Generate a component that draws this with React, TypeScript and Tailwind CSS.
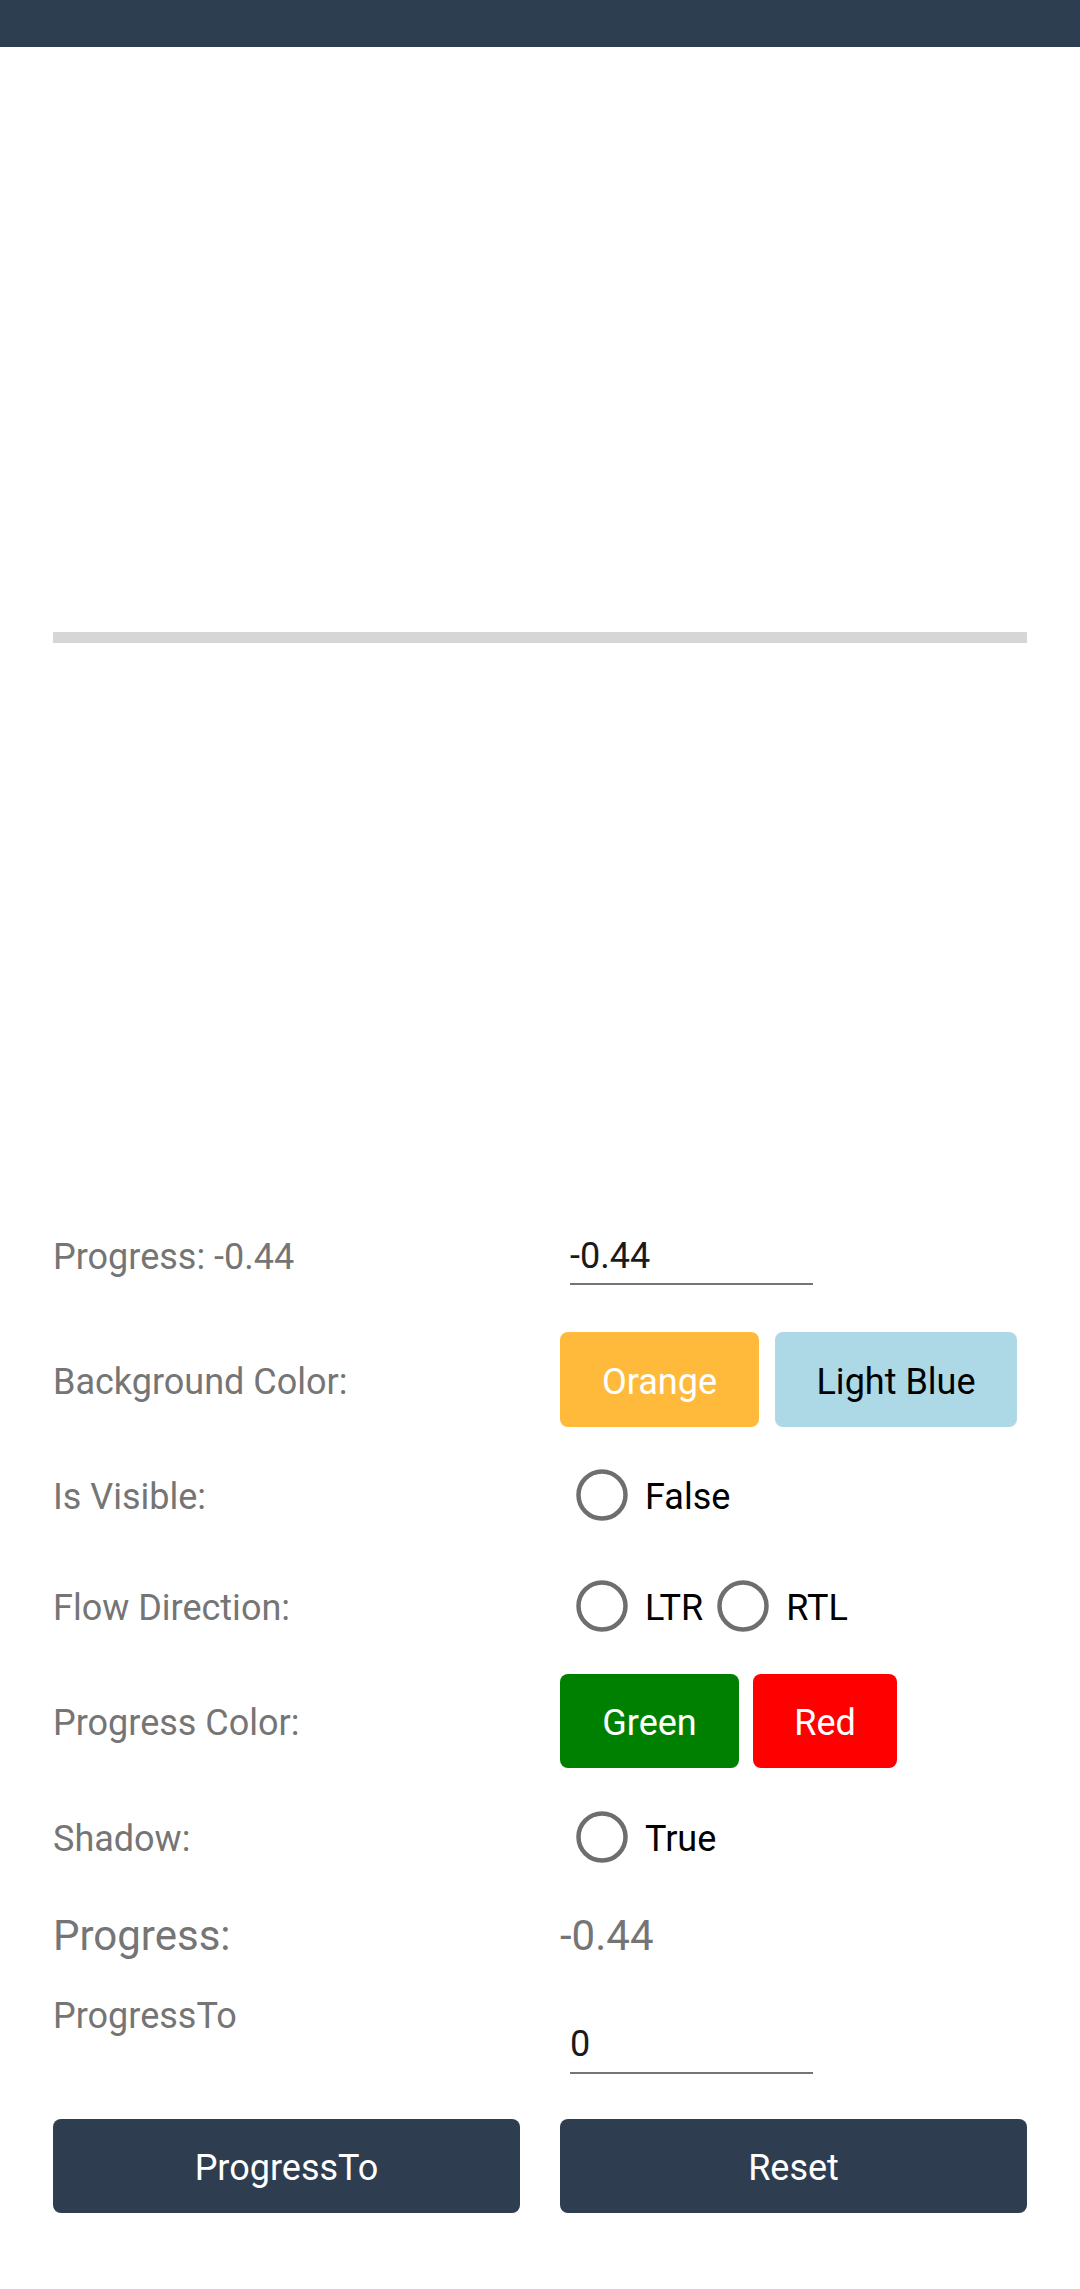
import { useState } from "react";

const Radio = ({ label }: { label: string }) => (
  <div className="flex items-center gap-[17px]">
    <svg width="52" height="52" viewBox="0 0 52 52" className="shrink-0">
      <circle cx="26" cy="26" r="23.5" fill="none" stroke="#6e6e6e" strokeWidth="4.5" />
    </svg>
    <span className="pt-[4px] text-[36px] leading-none text-black">{label}</span>
  </div>
);

const Label = ({ children }: { children: React.ReactNode }) => (
  <span className="pt-[4px] text-[36px] leading-[44px] text-[#757575]">{children}</span>
);

export default function App() {
  const [progress, setProgress] = useState("-0.44");
  const [target, setTarget] = useState("0");

  return (
    <div className="w-[1080px] min-h-[2289px] bg-white font-['Roboto',sans-serif]">
      {/* Toolbar */}
      <div className="h-[47px] bg-[#2c3e50]" />

      {/* Progress bar area */}
      <div className="h-[1181px] flex items-center px-[53px]">
        <div className="w-full h-[11px] bg-[#d6d6d6]" />
      </div>

      <div className="px-[53px]">
        {/* Progress input */}
        <div className="grid grid-cols-2 gap-x-[40px] h-[70px] items-center -mt-[8px]">
          <Label>Progress: {progress}</Label>
          <div className="ml-[10px] w-[243px] h-[60px] pt-[4px] border-b-2 border-[#757575] flex items-center">
            <input
              value={progress}
              onChange={(e) => setProgress(e.target.value)}
              className="w-full bg-transparent outline-none text-[36px] leading-none text-[#1a1a1a]"
            />
          </div>
        </div>

        {/* Background color */}
        <div className="grid grid-cols-2 gap-x-[40px] h-[95px] items-center mt-[42px]">
          <Label>Background Color:</Label>
          <div className="flex gap-[16px] h-full">
            <button className="w-[199px] h-full pt-[4px] rounded-[8px] bg-[#ffba3c] text-white text-[36px]">Orange</button>
            <button className="w-[242px] h-full pt-[4px] rounded-[8px] bg-[#add8e6] text-black text-[36px]">Light Blue</button>
          </div>
        </div>

        {/* Is visible */}
        <div className="grid grid-cols-2 gap-x-[40px] h-[60px] items-center mt-[38px]">
          <Label>Is Visible:</Label>
          <div className="flex pl-[16px]">
            <Radio label="False" />
          </div>
        </div>

        {/* Flow direction */}
        <div className="grid grid-cols-2 gap-x-[40px] h-[60px] items-center mt-[51px]">
          <Label>Flow Direction:</Label>
          <div className="flex pl-[16px] gap-[14px]">
            <Radio label="LTR" />
            <Radio label="RTL" />
          </div>
        </div>

        {/* Progress color */}
        <div className="grid grid-cols-2 gap-x-[40px] h-[94px] items-center mt-[38px]">
          <Label>Progress Color:</Label>
          <div className="flex gap-[14px] h-full">
            <button className="w-[179px] h-full pt-[4px] rounded-[8px] bg-[#008000] text-white text-[36px]">Green</button>
            <button className="w-[144px] h-full pt-[4px] rounded-[8px] bg-[#ff0000] text-white text-[36px]">Red</button>
          </div>
        </div>

        {/* Shadow */}
        <div className="grid grid-cols-2 gap-x-[40px] h-[60px] items-center mt-[39px]">
          <Label>Shadow:</Label>
          <div className="flex pl-[16px]">
            <Radio label="True" />
          </div>
        </div>

        {/* Progress value */}
        <div className="grid grid-cols-2 gap-x-[40px] h-[60px] items-center mt-[39px]">
          <span className="text-[42px] leading-none text-[#757575]">Progress:</span>
          <span className="text-[42px] leading-none text-[#757575]">{progress}</span>
        </div>

        {/* ProgressTo input */}
        <div className="grid grid-cols-2 gap-x-[40px] items-start mt-[28px]">
          <span className="text-[36px] leading-[44px] text-[#757575]">ProgressTo</span>
          <div className="ml-[10px] mt-[18px] w-[243px] h-[62px] pt-[4px] border-b-2 border-[#757575] flex items-center">
            <input
              value={target}
              onChange={(e) => setTarget(e.target.value)}
              className="w-full bg-transparent outline-none text-[36px] leading-none text-[#1a1a1a]"
            />
          </div>
        </div>

        {/* Actions */}
        <div className="grid grid-cols-2 gap-x-[40px] mt-[45px]">
          <button className="h-[94px] pt-[4px] rounded-[8px] bg-[#2e3e50] text-white text-[36px]">ProgressTo</button>
          <button className="h-[94px] pt-[4px] rounded-[8px] bg-[#2e3e50] text-white text-[36px]">Reset</button>
        </div>
      </div>
    </div>
  );
}
